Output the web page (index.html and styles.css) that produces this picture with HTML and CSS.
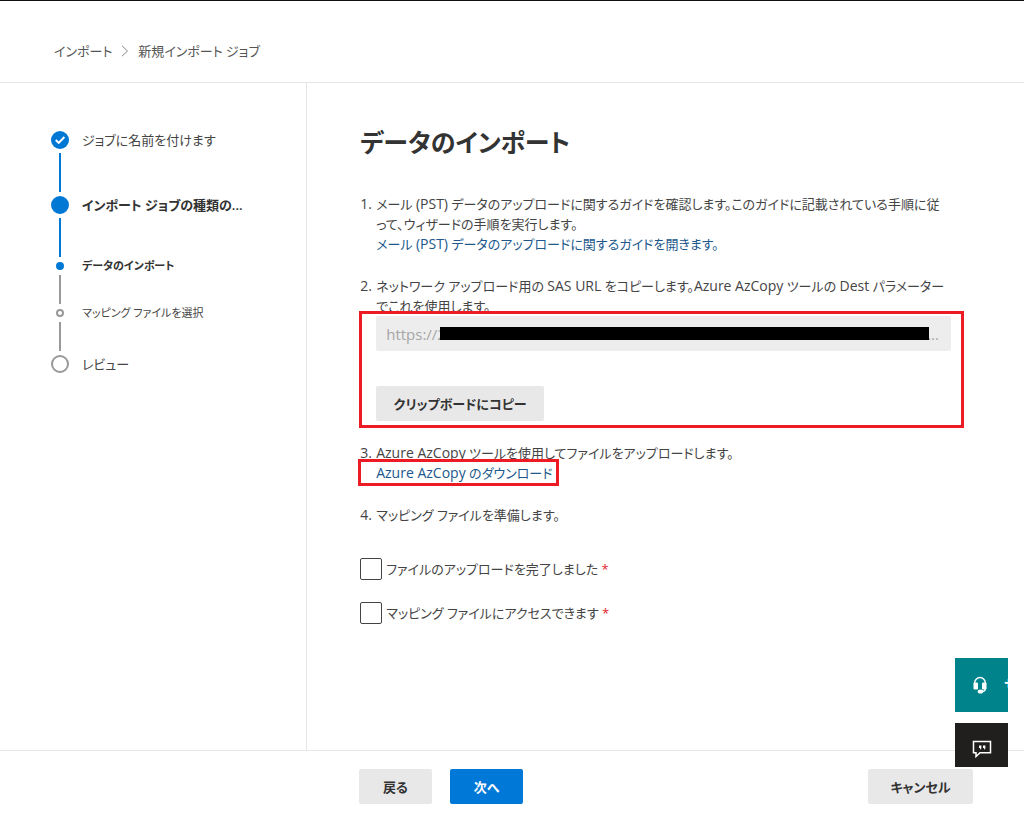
FILE: index.html
```html
<!DOCTYPE html>
<html lang="ja">
<head>
<meta charset="utf-8">
<meta name="viewport" content="width=device-width, initial-scale=1">
<title>新規インポート ジョブ</title>
<link rel="stylesheet" href="styles.css">
</head>
<body>
<header class="topbar">
  <nav class="crumbs" aria-label="階層">
    <a class="crumb" href="#import">インポート</a>
    <svg class="crumb-sep" viewBox="0 0 8 12" aria-hidden="true"><path d="M1 .8 6.5 6 1 11.2"/></svg>
    <span class="crumb">新規インポート ジョブ</span>
  </nav>
</header>
<div class="body">
  <aside class="sidebar">
    <ol class="steps">
      <li class="step">
        <span class="rail"><svg class="check" viewBox="0 0 18 18" aria-hidden="true"><circle cx="9" cy="9" r="9"/><path d="m4.8 9 2.9 2.9L13.4 6"/></svg></span>
        <span class="step-label">ジョブに名前を付けます</span>
      </li>
      <li class="link link-long link-blue"></li>
      <li class="step" aria-current="step">
        <span class="rail"><span class="dot dot-full"></span></span>
        <span class="step-label strong">インポート ジョブの種類の...</span>
      </li>
      <li class="link link-long link-blue"></li>
      <li class="step step-small">
        <span class="rail"><span class="dot dot-mini dot-full"></span></span>
        <span class="step-label strong">データのインポート</span>
      </li>
      <li class="link"></li>
      <li class="step step-small">
        <span class="rail"><span class="dot dot-mini"></span></span>
        <span class="step-label">マッピング ファイルを選択</span>
      </li>
      <li class="link"></li>
      <li class="step">
        <span class="rail"><span class="dot"></span></span>
        <span class="step-label">レビュー</span>
      </li>
    </ol>
  </aside>
  <main class="main">
    <h1 class="title">データのインポート</h1>
    <ol class="tasks">
      <li class="task"><div class="task-body">
        <p class="text">メール <span class="latin">(PST)</span> データのアップロードに関するガイドを確認します。このガイドに記載されている手順に従<br>って、ウィザードの手順を実行します。</p>
        <a class="more" href="#guide">メール <span class="latin">(PST)</span> データのアップロードに関するガイドを開きます。</a>
      </div></li>
      <li class="task"><div class="task-body">
        <label class="text" for="sas">ネットワーク アップロード用の <span class="latin">SAS URL</span> をコピーします。<span class="latin">Azure AzCopy</span> ツールの <span class="latin">Dest</span> パラメーター<br>でこれを使用します。</label>
        <div class="marked marked-wide">
          <div class="field">
            <input class="field-input" id="sas" type="text" value="https://2" disabled>
            <span class="field-more">...</span>
            <span class="redaction"></span>
          </div>
          <button class="btn btn-copy" type="button">クリップボードにコピー</button>
        </div>
      </div></li>
      <li class="task"><div class="task-body">
        <p class="text"><span class="latin">Azure AzCopy</span> ツールを使用してファイルをアップロードします。</p>
        <a class="more marked marked-link" href="#azcopy"><span class="latin">Azure AzCopy</span> のダウンロード</a>
      </div></li>
      <li class="task"><div class="task-body">
        <p class="text">マッピング ファイルを準備します。</p>
      </div></li>
    </ol>
    <div class="checks">
      <label class="check-row"><input class="box" type="checkbox"><span>ファイルのアップロードを完了しました <span class="req">*</span></span></label>
      <label class="check-row"><input class="box" type="checkbox"><span>マッピング ファイルにアクセスできます <span class="req">*</span></span></label>
    </div>
  </main>
</div>
<footer class="footer">
  <button class="btn" type="button">戻る</button>
  <button class="btn btn-primary" type="button">次へ</button>
  <button class="btn btn-cancel" type="button">キャンセル</button>
</footer>
<div class="float">
  <button class="float-btn float-help" type="button">
    <svg class="float-icon" viewBox="0 0 16 18" aria-hidden="true"><path class="line" d="M2.600 9V7a5.400 5.400 0 0 1 10.800 0v2M13.400 12c0 2.300-1.600 3.600-3.800 3.600"/><rect x="1.500" y="6.500" width="4.500" height="7" rx="1.200"/><rect x="10" y="6.500" width="4.500" height="7" rx="1.200"/><ellipse cx="8.500" cy="15.400" rx="2.800" ry="2"/></svg>
    <span class="float-text">サポート</span>
  </button>
  <button class="float-btn float-chat" type="button" aria-label="フィードバック">
    <svg class="chat-icon" viewBox="0 0 20 18" aria-hidden="true"><path class="line" d="M1.500 1.500h17v11.200H8L4 16.500v-3.800H1.500z"/><path d="M7 5.500h2.400v2.700L8 9.800V8H7zM11 5.500h2.400v2.700L12 9.800V8h-1z"/></svg>
  </button>
</div>
</body>
</html>
```
FILE: styles.css
```css
* { box-sizing: border-box; }

body {
  margin: 0;
  min-height: 100vh;
  display: flex;
  flex-direction: column;
  border-top: 1px solid #111;
  background: #fff;
  color: #444;
  font: 13px/20px "Open Sans", "Noto Sans CJK JP", sans-serif;
  font-feature-settings: "palt";
}

ol, p, h1 { margin: 0; padding: 0; }
ol { list-style: none; }
a { text-decoration: none; }
button, input { font: inherit; font-feature-settings: inherit; }
.latin { font-size: 14px; line-height: 1; }

.topbar {
  padding: 40px 54px 21px;
  border-bottom: 1px solid #e6e6e6;
}
.crumbs { display: flex; align-items: center; gap: 9px; }
.crumb { color: #555; }
.crumb-sep {
  width: 8px;
  height: 12px;
  fill: none;
  stroke: #888;
}

.body { flex: 1; display: flex; }
.sidebar {
  width: 30%;
  padding: 46px 0 0 50px;
  border-right: 1px solid #e6e6e6;
}
.step { display: flex; align-items: center; gap: 12px; height: 22px; }
.step-small { height: 14px; font-size: 11px; }
.rail { width: 20px; display: flex; justify-content: center; flex: none; }
.step-label { white-space: nowrap; }
.strong { font-weight: 600; color: #333; }
.check { width: 18px; height: 18px; fill: #0078d4; }
.check path { fill: none; stroke: #fff; stroke-width: 2; }
.dot {
  width: 18px;
  height: 18px;
  border: 2px solid #999;
  border-radius: 50%;
}
.dot-mini { width: 8px; height: 8px; }
.dot-full { border-color: #0078d4; background: #0078d4; }
.link {
  width: 2px;
  height: 29px;
  margin: 2px 0 2px 9px;
  background: #999;
}
.link-long { height: 39px; }
.link-blue { background: #0078d4; }

.main { flex: 1; min-width: 0; padding: 39px 73px 40px 53px; }
.title {
  font-size: 25px;
  line-height: 40px;
  font-weight: 600;
  color: #333;
}
.tasks { margin-top: 32px; display: grid; gap: 22px; counter-reset: task; }
.task { display: flex; counter-increment: task; }
.task::before { content: counter(task) "."; width: 16px; flex: none; font-size: 14px; }
.task-body { flex: 1; min-width: 0; }
.text { display: block; }
.more { color: #20588c; }

.marked { position: relative; }
.marked::after {
  content: "";
  position: absolute;
  border: 3px solid #ed1c24;
  pointer-events: none;
}
.marked-wide::after { inset: -5px -13px -7px -17px; }
.marked-link::after { inset: -5px -7px -4px -18px; }

.field {
  position: relative;
  display: flex;
  align-items: center;
  height: 35px;
  padding: 0 12px 0 10px;
  border-radius: 2px;
  background: #ededed;
  color: #a6a6a6;
  font-size: 15px;
}
.field-input {
  flex: 1;
  min-width: 0;
  padding: 0;
  border: 0;
  background: none;
  color: inherit;
}
.redaction {
  position: absolute;
  inset: 11px 22px 11px 64px;
  background: #000;
}

.btn {
  height: 35px;
  min-width: 73px;
  padding: 0 17px;
  border: 0;
  border-radius: 2px;
  background: #e8e8e8;
  color: #333;
  font-weight: 600;
}
.btn-copy { display: block; min-width: 168px; margin-top: 35px; }
.btn-primary { background: #0078d7; color: #fff; }
.btn-cancel { min-width: 105px; margin-left: auto; }

.checks { margin-top: 33px; display: grid; gap: 22px; }
.check-row { display: flex; align-items: center; gap: 4px; }
.box {
  appearance: none;
  width: 22px;
  height: 22px;
  margin: 0;
  border: 1px solid #444;
  border-radius: 2px;
}
.box:checked { background: #0078d4; }
.req { color: #e3242b; }

.footer {
  display: flex;
  gap: 18px;
  padding: 18px 51px 17px 359px;
  border-top: 1px solid #e6e6e6;
}

.float {
  position: fixed;
  right: 16px;
  bottom: 54px;
  display: grid;
  gap: 11px;
}
.float-btn {
  display: flex;
  align-items: center;
  width: 53px;
  padding: 0 0 0 17px;
  border: 0;
  overflow: hidden;
  color: #fff;
}
.float-help { height: 54px; gap: 16px; background: #00838a; }
.float-chat { height: 44px; background: #201f1e; }
.float-icon { flex: none; width: 16px; height: 18px; fill: #fff; }
.chat-icon { flex: none; width: 20px; height: 18px; margin-top: 8px; fill: #fff; }
.line { fill: none; stroke: #fff; stroke-width: 1.5; }
.float-text { white-space: nowrap; font-size: 15px; font-weight: 600; }
```
